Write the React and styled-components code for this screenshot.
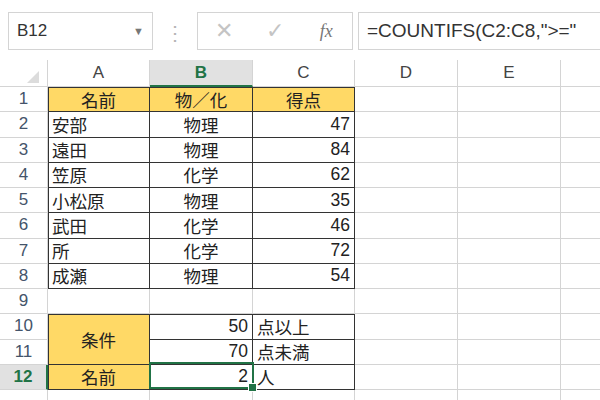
import React from "react";
import styled, { createGlobalStyle } from "styled-components";

const G = createGlobalStyle`
  html,body{margin:0;padding:0;background:#fff;width:600px;height:400px;overflow:hidden;}
  *{box-sizing:border-box;}
  body{font-family:"Noto Sans CJK JP","Liberation Sans",sans-serif;}
`;
const Bar = styled.div`display:flex;align-items:center;height:60px;padding:12px 0 10px 8px;gap:0;`;
const Box = styled.div`
  height:38px;border:1px solid #d4d4d4;display:flex;align-items:center;background:#fff;
  width:${p => p.w}px;flex:${p => p.grow ? 1 : "none"};margin-left:${p => p.ml || 0}px;
  padding:0 8px;font-family:"Liberation Sans",sans-serif;font-size:${p => p.fs || 17}px;color:#333;
  border-right:${p => p.grow ? "none" : "1px solid #d4d4d4"};
`;
const Dots = styled.div`width:44px;text-align:center;color:#b5b5b5;font-size:20px;`;
const Icon = styled.span`flex:1;text-align:center;color:#c4c4c4;font-size:22px;`;
const Fx = styled.span`flex:1;text-align:center;color:#777;font-family:"Liberation Serif",serif;font-style:italic;font-size:18px;`;

const Grid = styled.div`
  display:grid;grid-template-columns:48px 102px 103px 102px 103px 103px 40px;
  grid-template-rows:27px repeat(12,25.25px) 20px;position:relative;
`;
const Head = styled.div`
  display:flex;align-items:center;justify-content:center;font-family:"Liberation Sans",sans-serif;
  font-size:17px;background:${p => p.sel ? "#e1e1e1" : "#fff"};color:${p => p.sel ? "#217346" : "#444"};
  font-weight:${p => p.sel ? 700 : 400};
  border-right:1px solid #d4d4d4;border-bottom:${p => p.selB ? "2px solid #217346" : "1px solid #d4d4d4"};
`;
const RowHead = styled(Head)`
  color:${p => p.sel ? "#217346" : "#44546a"};
  border-right:${p => p.selR ? "2px solid #217346" : "1px solid #d4d4d4"};
  border-bottom:1px solid #d4d4d4;
`;
const Cell = styled.div`
  display:flex;align-items:center;padding:0 4px;font-size:17.5px;color:#222;
  justify-content:${p => p.a === "r" ? "flex-end" : p.a === "c" ? "center" : "flex-start"};
  background:${p => p.y ? "#ffd966" : "#fff"};
  border-right:1px solid ${p => p.d ? "#333" : "#d4d4d4"};
  border-bottom:1px solid ${p => p.d ? "#333" : "#d4d4d4"};
  box-shadow:${p => [p.t && "inset 0 1px 0 #333", p.l && "inset 1px 0 0 #333"].filter(Boolean).join(",") || "none"};
  grid-row:${p => p.rs ? `span ${p.rs}` : "auto"};
  font-family:${p => p.num ? '"Liberation Sans",sans-serif' : '"Noto Sans CJK JP",sans-serif'};
`;
const Sel = styled.div`
  position:absolute;left:149px;top:302px;width:105px;height:27px;border:2px solid #217346;pointer-events:none;
  &::after{content:"";position:absolute;right:-5px;bottom:-5px;width:7px;height:7px;background:#217346;border:1px solid #fff;}
`;
const Corner = styled(Head)`
  &::after{content:"";width:0;height:0;border-style:solid;border-width:0 0 12px 12px;border-color:transparent transparent #dcdcdc transparent;margin:8px 0 0 18px;}
`;

const data = [
  ["名前", "物／化", "得点", true],
  ["安部", "物理", "47"], ["遠田", "物理", "84"], ["笠原", "化学", "62"], ["小松原", "物理", "35"],
  ["武田", "化学", "46"], ["所", "化学", "72"], ["成瀬", "物理", "54"],
];

export default function App() {
  return (
    <>
      <G />
      <Bar>
        <Box w={145}>B12<span style={{ marginLeft: "auto", color: "#777", fontSize: 11 }}>▼</span></Box>
        <Dots>⋮</Dots>
        <Box w={156} style={{ padding: 0 }}><Icon>✕</Icon><Icon>✓</Icon><Fx>fx</Fx></Box>
        <Box grow ml={5} fs={19}>=COUNTIFS(C2:C8,"&gt;="</Box>
      </Bar>
      <Grid>
        <Corner />
        {["A", "B", "C", "D", "E", ""].map(c => <Head key={c} sel={c === "B"} selB={c === "B"}>{c}</Head>)}
        {data.map((r, i) => (
          <React.Fragment key={i}>
            <RowHead>{i + 1}</RowHead>
            <Cell d y={r[3]} a={r[3] ? "c" : "l"} l t={i === 0}>{r[0]}</Cell>
            <Cell d y={r[3]} a="c" t={i === 0}>{r[1]}</Cell>
            <Cell d y={r[3]} a={r[3] ? "c" : "r"} num={!r[3]} t={i === 0}>{r[2]}</Cell>
            <Cell /><Cell /><Cell />
          </React.Fragment>
        ))}
        <RowHead>9</RowHead><Cell /><Cell /><Cell /><Cell /><Cell /><Cell />
        <RowHead>10</RowHead>
        <Cell d y a="c" rs={2} l t>条件</Cell>
        <Cell d a="r" num t>50</Cell><Cell d t>点以上</Cell><Cell /><Cell /><Cell />
        <RowHead>11</RowHead>
        <Cell d a="r" num>70</Cell><Cell d>点未満</Cell><Cell /><Cell /><Cell />
        <RowHead sel selR>12</RowHead>
        <Cell d y a="c" l>名前</Cell>
        <Cell d a="r" num>2</Cell><Cell d>人</Cell><Cell /><Cell /><Cell />
        <RowHead /><Cell /><Cell /><Cell /><Cell /><Cell /><Cell />
        <Sel />
      </Grid>
    </>
  );
}
